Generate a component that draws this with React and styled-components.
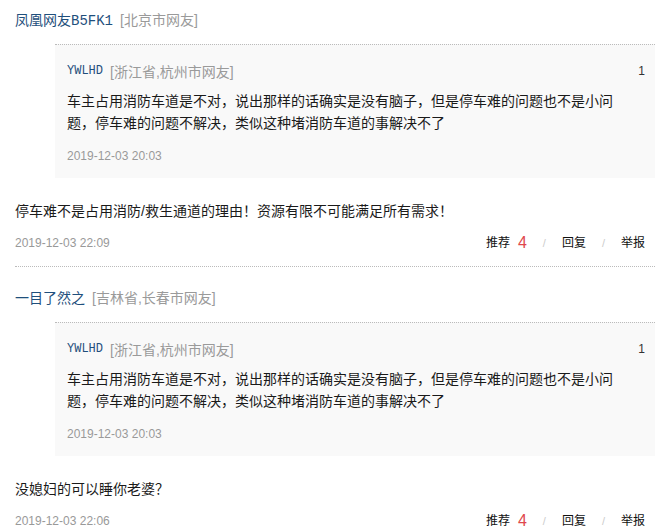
import React from "react";
import styled, { createGlobalStyle } from "styled-components";

const GlobalStyle = createGlobalStyle`
  html, body {
    margin: 0;
    padding: 0;
    background: #fff;
  }
  body {
    font-family: "Liberation Sans", "Noto Sans CJK SC", sans-serif;
    color: #222;
  }
`;

const comments = [
  {
    id: 1,
    name: "凤凰网友B5FK1",
    location: "[北京市网友]",
    quote: {
      name: "YWLHD",
      location: "[浙江省,杭州市网友]",
      floor: 1,
      text: "车主占用消防车道是不对，说出那样的话确实是没有脑子，但是停车难的问题也不是小问题，停车难的问题不解决，类似这种堵消防车道的事解决不了",
      time: "2019-12-03 20:03",
    },
    text: "停车难不是占用消防/救生通道的理由！资源有限不可能满足所有需求！",
    time: "2019-12-03 22:09",
    likes: 4,
  },
  {
    id: 2,
    name: "一目了然之",
    location: "[吉林省,长春市网友]",
    quote: {
      name: "YWLHD",
      location: "[浙江省,杭州市网友]",
      floor: 1,
      text: "车主占用消防车道是不对，说出那样的话确实是没有脑子，但是停车难的问题也不是小问题，停车难的问题不解决，类似这种堵消防车道的事解决不了",
      time: "2019-12-03 20:03",
    },
    text: "没媳妇的可以睡你老婆？",
    time: "2019-12-03 22:06",
    likes: 4,
  },
];

export default function App() {
  return (
    <>
      <GlobalStyle />
      <List>
        {comments.map((c) => (
          <Comment key={c.id}>
            <Head>
              <UserName>{c.name}</UserName>
              <Location>{c.location}</Location>
            </Head>
            <Quote>
              <QuoteHead>
                <QuoteUser>
                  <UserName $small>{c.quote.name}</UserName>
                  <Location>{c.quote.location}</Location>
                </QuoteUser>
                <Floor>{c.quote.floor}</Floor>
              </QuoteHead>
              <QuoteText>{c.quote.text}</QuoteText>
              <Time>{c.quote.time}</Time>
            </Quote>
            <Body>{c.text}</Body>
            <Footer>
              <Time>{c.time}</Time>
              <Actions>
                <Action>
                  推荐<Count>{c.likes}</Count>
                </Action>
                <Sep>/</Sep>
                <Action>回复</Action>
                <Sep>/</Sep>
                <Action>举报</Action>
              </Actions>
            </Footer>
          </Comment>
        ))}
      </List>
    </>
  );
}

const List = styled.div`
  padding: 0 5px 0 15px;
`;

const Comment = styled.div`
  padding: 19px 0 13px;
  border-bottom: 1px dotted #bbb;

  &:first-child {
    padding-top: 8px;
  }
`;

const Head = styled.div`
  display: flex;
  align-items: center;
  gap: 7px;
  height: 22px;
`;

const UserName = styled.span`
  font-family: "Liberation Mono", "Noto Sans CJK SC", monospace;
  font-size: ${(p) => (p.$small ? "12px" : "13px")};
  color: #1f4f7c;
  white-space: nowrap;

  &:first-child {
    font-size: ${(p) => (p.$small ? "12px" : "14px")};
  }
`;

const Location = styled.span`
  font-size: 14px;
  color: #9a9a9a;
  white-space: nowrap;
`;

const Quote = styled.div`
  margin: 14px 0 0 40px;
  padding: 16px 10px 12px 12px;
  background: #f9f9f9;
  border-top: 1px dotted #bbb;
`;

const QuoteHead = styled.div`
  display: flex;
  justify-content: space-between;
  align-items: center;
  height: 20px;
`;

const QuoteUser = styled.div`
  display: flex;
  align-items: center;
  gap: 7px;
`;

const Floor = styled.span`
  font-size: 12px;
  color: #333;
`;

const QuoteText = styled.p`
  margin: 9px 0 0;
  padding-right: 22px;
  font-size: 14px;
  line-height: 22px;
  color: #1a1a1a;
`;

const Time = styled.div`
  margin-top: 12px;
  font-size: 12px;
  line-height: 20px;
  color: #999;
`;

const Body = styled.p`
  margin: 22px 0 0;
  font-size: 14px;
  line-height: 22px;
  color: #1a1a1a;
`;

const Footer = styled.div`
  display: flex;
  justify-content: space-between;
  align-items: center;
  margin-top: 11px;

  ${Time} {
    margin-top: 0;
  }
`;

const Actions = styled.div`
  display: flex;
  align-items: center;
  gap: 16px;
  padding-right: 10px;
  line-height: 20px;
`;

const Action = styled.span`
  display: flex;
  align-items: center;
  gap: 8px;
  font-size: 12px;
  color: #111;
`;

const Count = styled.span`
  font-size: 16px;
  color: #e0474c;
`;

const Sep = styled.span`
  font-size: 11px;
  color: #ccc;
`;
